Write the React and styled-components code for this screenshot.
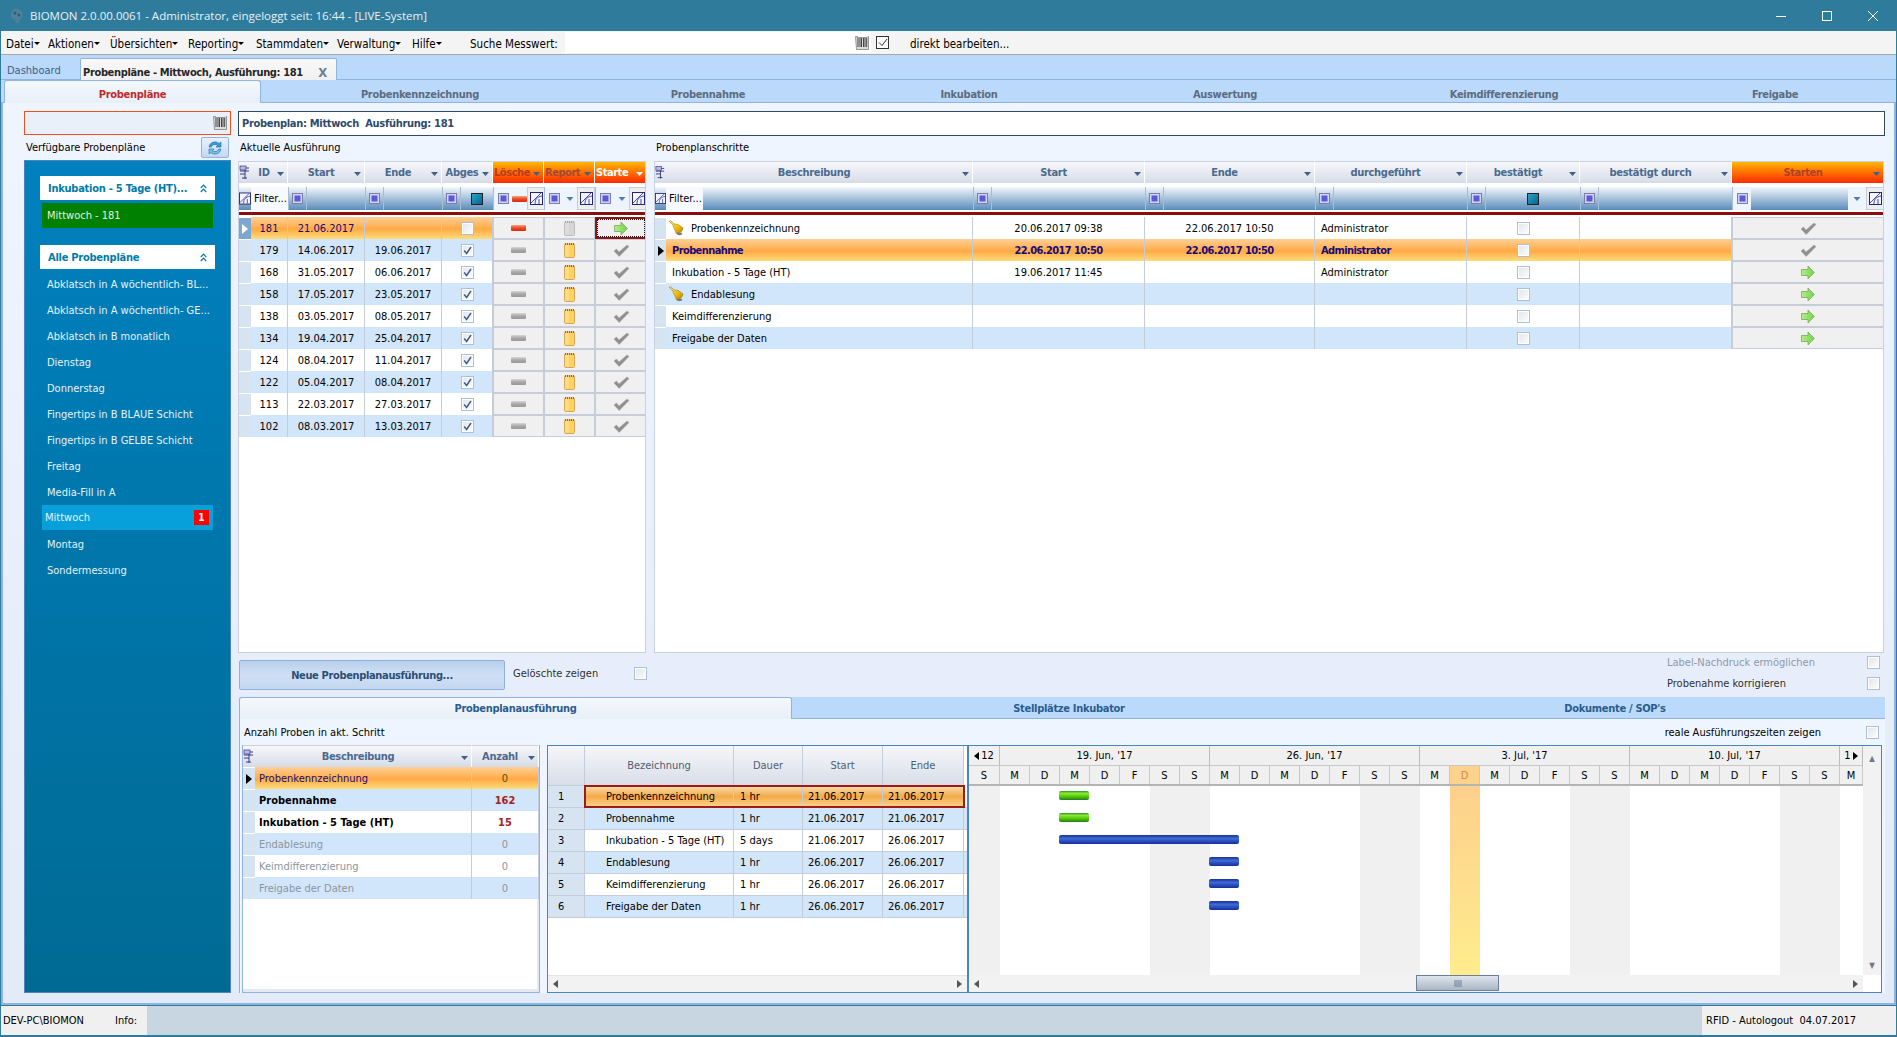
import React from "react";
import styled, { createGlobalStyle, css } from "styled-components";

const GlobalStyle = createGlobalStyle`
  html, body { margin: 0; padding: 0; }
  body {
    width: 1897px;
    height: 1037px;
    overflow: hidden;
    font-family: "DejaVu Sans Condensed", "DejaVu Sans", sans-serif;
    font-stretch: condensed;
    font-size: 11px;
    color: #000;
  }
  * { box-sizing: border-box; }
`;

/* ---------- icons ---------- */
const WinIcon = styled.svg`
  width: 12px;
  height: 12px;
  display: block;
`;

const CaretDown = ({ color = "#3f6288", w = 7 }) => (
  <svg width={w} height="4" viewBox="0 0 7 4" style={{ display: "block", flex: "none" }}>
    <path d="M0 0h7L3.5 4z" fill={color} />
  </svg>
);

const Barcode = ({ size = 16 }) => (
  <svg width={size} height={size} viewBox="0 0 16 16" style={{ display: "block" }}>
    <path d="M1.5 1.5h2l-.4 1H13l1-1h.5V14.5H2.5z" fill="#dcdcdc" stroke="#808080" strokeWidth="0.8" />
    <path d="M4 3v9M6 3v9M7.5 3v9M9.5 3v9M11 3v9M12.7 3v9" stroke="#444" strokeWidth="1" />
  </svg>
);

const RefreshIcon = () => (
  <svg width="18" height="18" viewBox="0 0 18 18">
    <path d="M3 8a6 6 0 0 1 10-3.6L15 3v5h-5l1.6-1.6A4 4 0 0 0 5.2 8z" fill="#3f9bd8" stroke="#1d6cab" strokeWidth=".6" />
    <path d="M15 10a6 6 0 0 1-10 3.6L3 15v-5h5l-1.6 1.6A4 4 0 0 0 12.8 10z" fill="#7bbdea" stroke="#1d6cab" strokeWidth=".6" />
  </svg>
);

const DoubleUp = () => (
  <svg width="7" height="9" viewBox="0 0 7 9" style={{ display: "block" }}>
    <path d="M.8 4 3.5 1.2 6.2 4M.8 8 3.5 5.2 6.2 8" stroke="#007ba7" strokeWidth="1.2" fill="none" />
  </svg>
);

const ColumnChooser = () => (
  <svg width="12" height="16" viewBox="0 0 12 16" style={{ display: "block" }}>
    <path d="M1 3h9M1 6h9M1 9h5M6 1v13M3 13h5" stroke="#3a3a80" strokeWidth="1" fill="none" />
    <rect x="1" y="1" width="6" height="4" fill="#b8b8ea" stroke="#3a3a80" strokeWidth=".7" />
  </svg>
);

const FilterEdit = () => (
  <svg width="13" height="13" viewBox="0 0 13 13" style={{ display: "block" }}>
    <rect x=".5" y=".5" width="12" height="12" fill="#f4f6fc" stroke="#26266e" />
    <path d="M1 11 11 1M5 12c0-5 2-7 7-8M9 12V7" stroke="#4545c5" strokeWidth="1" fill="none" />
  </svg>
);

const OpSquare = () => (
  <svg width="11" height="11" viewBox="0 0 11 11" style={{ display: "block" }}>
    <rect x=".5" y=".5" width="10" height="10" fill="#d0d4f2" stroke="#7a7ea8" />
    <rect x="2.5" y="2.5" width="6" height="6" fill="#5a5ad6" />
  </svg>
);

const TealSquare = () => (
  <svg width="12" height="12" viewBox="0 0 12 12" style={{ display: "block" }}>
    <defs>
      <linearGradient id="tealGrad" x1="0" y1="0" x2="1" y2="1">
        <stop offset="0" stopColor="#29a7c9" />
        <stop offset="1" stopColor="#0b5e8f" />
      </linearGradient>
    </defs>
    <rect x=".5" y=".5" width="11" height="11" fill="url(#tealGrad)" stroke="#222" />
  </svg>
);

const MinusBar = ({ red }) => (
  <svg width="15" height="6" viewBox="0 0 15 6" style={{ display: "block" }}>
    <defs>
      <linearGradient id="minusRed" x1="0" y1="0" x2="0" y2="1">
        <stop offset="0" stopColor="#f7a08a" />
        <stop offset=".5" stopColor="#ec4a20" />
        <stop offset="1" stopColor="#d42c10" />
      </linearGradient>
      <linearGradient id="minusGrey" x1="0" y1="0" x2="0" y2="1">
        <stop offset="0" stopColor="#d8d8d8" />
        <stop offset=".5" stopColor="#a8a8a8" />
        <stop offset="1" stopColor="#999" />
      </linearGradient>
    </defs>
    <rect width="15" height="6" rx="1" fill={red ? "url(#minusRed)" : "url(#minusGrey)"} />
  </svg>
);

const Notepad = ({ off }) => (
  <svg width="11" height="16" viewBox="0 0 11 16" style={{ display: "block" }}>
    <rect x=".5" y="2" width="10" height="13.5" rx="1" fill={off ? "#d6d6d6" : "#ffd15e"} stroke={off ? "#bdbdbd" : "#d9a55a"} />
    <rect x="1" y="2.5" width="4" height="12" fill={off ? "#dcdcdc" : "#ffdd80"} />
    <path d="M1.5 1v2M3.5 1v2M5.5 1v2M7.5 1v2M9.5 1v2" stroke={off ? "#aaa" : "#8a6a3a"} strokeWidth="1" />
  </svg>
);

const CheckMark = () => (
  <svg width="17" height="13" viewBox="0 0 17 13" style={{ display: "block" }}>
    <path d="M1 7l2.5-2 2.5 3L14 1l2 1.5L6.2 12.5z" fill="#8f8f8f" stroke="#a8a8a8" strokeWidth=".6" />
  </svg>
);

const GreenArrow = () => (
  <svg width="14" height="15" viewBox="0 0 14 15" style={{ display: "block" }}>
    <defs>
      <linearGradient id="arrowGreen" x1="0" y1="0" x2="1" y2="0">
        <stop offset="0" stopColor="#b4ef86" />
        <stop offset="1" stopColor="#6fd44a" />
      </linearGradient>
    </defs>
    <path d="M.5 4.5h6.5V1l6.3 6.5L7 14v-3.5H.5z" fill="url(#arrowGreen)" stroke="#7da565" strokeWidth=".8" />
  </svg>
);

const Bell = () => (
  <svg width="17" height="16" viewBox="0 0 17 16" style={{ display: "block" }}>
    <defs>
      <linearGradient id="bellGold" x1="0" y1="0" x2="1" y2="1">
        <stop offset="0" stopColor="#fff27a" />
        <stop offset=".6" stopColor="#ebb800" />
        <stop offset="1" stopColor="#a87c00" />
      </linearGradient>
    </defs>
    <path d="M1.2 1.2 3 .8l3 3.2 4 .4 5 3.6c-.4 3-3 5.5-6.6 5.8C7.6 10 5 7 5 5.2z" fill="url(#bellGold)" stroke="#9a7a10" strokeWidth=".6" />
    <ellipse cx="11.5" cy="13.8" rx="2.8" ry="1.4" fill="#7d7d7d" />
  </svg>
);

const TriRight = ({ color = "#000" }) => (
  <svg width="6" height="10" viewBox="0 0 6 10" style={{ display: "block" }}>
    <path d="M0 0l6 5-6 5z" fill={color} />
  </svg>
);

/* ---------- window chrome ---------- */
const Window = styled.div`
  width: 1897px;
  height: 1037px;
  display: flex;
  flex-direction: column;
  background: #2e7b9c;
  padding: 0 1px 2px 1px;
`;

const TitleBar = styled.div`
  height: 31px;
  flex: none;
  display: flex;
  align-items: center;
  padding: 0 0 0 9px;
  color: #e8f2f6;
  font-family: "Open Sans", sans-serif;
  font-stretch: normal;
  font-size: 11.5px;
`;

const AppLogo = styled.div`
  width: 14px;
  height: 16px;
  margin-right: 6px;
`;

const TitleText = styled.div`
  flex: 1;
`;

const WinButton = styled.div`
  width: 46px;
  height: 31px;
  display: flex;
  align-items: center;
  justify-content: center;
`;

const MenuBar = styled.div`
  height: 24px;
  flex: none;
  background: #f4f4f4;
  display: flex;
  align-items: center;
  padding: 3px 0 0 5px;
  border-bottom: 1px solid #a9a9a9;
  font-size: 11.5px;
`;

const MenuItem = styled.div`
  display: flex;
  align-items: flex-start;
  width: ${(p) => p.$w}px;
  flex: none;
`;

const MiniCaret = styled.span`
  width: 0;
  height: 0;
  margin-top: 5px;
  border-left: 3px solid transparent;
  border-right: 3px solid transparent;
  border-top: 3px solid #000;
`;

const SearchLabel = styled.div`
  margin-left: 26px;
  width: 95px;
  flex: none;
`;

const SearchField = styled.div`
  width: 306px;
  height: 21px;
  margin-top: -3px;
  background: #fff;
  flex: none;
  display: flex;
  align-items: center;
  justify-content: flex-end;
  padding-right: 1px;
`;

const EditToggle = styled.div`
  width: 13px;
  height: 13px;
  margin-top: -3px;
  border: 1px solid #333;
  margin-left: 5px;
  background: #fbfbfb;
  display: flex;
  align-items: center;
  justify-content: center;
  flex: none;
`;

const EditLabel = styled.div`
  margin-left: 21px;
`;

const DocTabs = styled.div`
  height: 25px;
  flex: none;
  background: #bbd9fb;
  display: flex;
  align-items: flex-end;
  padding-left: 6px;
  border-bottom: 1px solid #8fb4e3;
`;

const DashTab = styled.div`
  width: 73px;
  height: 22px;
  padding-top: 7px;
  color: #3b5f87;
`;

const ActiveDocTab = styled.div`
  width: 257px;
  height: 22px;
  margin-bottom: -1px;
  background: linear-gradient(#f9f9f9, #f0f0f0);
  border: 1px solid #8fb4e3;
  border-bottom: none;
  border-radius: 2px 2px 0 0;
  display: flex;
  align-items: center;
  justify-content: space-between;
  padding: 5px 9px 0 2px;
  font-weight: bold;
  letter-spacing: -0.35px;
  color: #262626;
`;

const CloseX = styled.span`
  color: #6e7f92;
  font-size: 13px;
  font-weight: bold;
`;

const StepTabs = styled.div`
  height: 23px;
  flex: none;
  display: grid;
  grid-template-columns: 257px 318px 258px 264px 248px 310px 232px;
  background: #bbd9fb;
  padding-left: 3px;
  border-bottom: 1px solid #8fb4e3;
`;

const StepTab = styled.div`
  display: flex;
  align-items: center;
  justify-content: center;
  font-weight: bold;
  letter-spacing: -0.3px;
  color: #5d6c7e;
  padding-top: 5px;
  ${(p) =>
    p.$active &&
    css`
      color: #bd2a2a;
      background: linear-gradient(#f4f8fe, #e8eff8);
      border: 1px solid #8fb4e3;
      border-bottom: none;
      border-radius: 3px 3px 0 0;
      height: 23px;
    `}
`;

/* ---------- main content ---------- */
const Content = styled.div`
  flex: 1;
  min-height: 0;
  display: flex;
  gap: 7px;
  background: linear-gradient(#eef5ff, #e3eaf8);
  border-right: 2px solid #8fb4e3;
  border-left: 2px solid #8fb4e3;
  border-bottom: 2px solid #8fb4e3;
  padding: 8px 9px 10px 21px;
`;

const LeftColumn = styled.div`
  width: 207px;
  flex: none;
  display: flex;
  flex-direction: column;
`;

const BarcodeBox = styled.div`
  height: 24px;
  flex: none;
  border: 1px solid #f0501c;
  background: #e9f0fa;
  display: flex;
  align-items: center;
  justify-content: flex-end;
  padding-right: 2px;
`;

const PlansHead = styled.div`
  height: 25px;
  flex: none;
  display: flex;
  align-items: center;
  justify-content: space-between;
  padding: 0 2px;
`;

const RefreshBtn = styled.div`
  width: 28px;
  height: 21px;
  border: 1px solid #8fb4e3;
  border-radius: 2px;
  background: linear-gradient(#e9f2fc, #c3d9f2);
  display: flex;
  align-items: center;
  justify-content: center;
`;

const Sidebar = styled.div`
  flex: 1;
  border: 1px solid #4a86bd;
  background: linear-gradient(#0081bf, #006a94);
  padding: 15px 15px 0 15px;
  color: #e6f2f8;
`;

const GroupHead = styled.div`
  height: 24px;
  width: 175px;
  background: #fff;
  color: #007ba7;
  font-weight: bold;
  letter-spacing: -0.25px;
  display: flex;
  align-items: center;
  justify-content: space-between;
  padding: 0 8px;
  margin-top: ${(p) => p.$top || 0}px;
`;

const RunningItem = styled.div`
  height: 25px;
  width: 171px;
  margin: 3px 0 0 2px;
  background: #008000;
  color: #e2f2e2;
  display: flex;
  align-items: center;
  padding-left: 5px;
`;

const PlanList = styled.div`
  margin-top: 2px;
`;

const PlanItem = styled.div`
  height: 26px;
  width: 171px;
  margin-left: 2px;
  display: flex;
  align-items: center;
  justify-content: space-between;
  white-space: nowrap;
  padding: 0 4px 0 ${(p) => (p.$active ? 3 : 5)}px;
  ${(p) =>
    p.$active &&
    css`
      background: #07a0db;
      height: 25px;
      margin-bottom: 1px;
    `}
`;

const RedBadge = styled.div`
  width: 15px;
  height: 15px;
  background: #f00;
  color: #fff;
  font-weight: bold;
  font-size: 10px;
  display: flex;
  align-items: center;
  justify-content: center;
`;

const RightColumn = styled.div`
  flex: 1;
  min-width: 0;
  display: flex;
  flex-direction: column;
`;

const PlanBox = styled.div`
  height: 25px;
  flex: none;
  background: #fff;
  border: 1px solid #2f4a62;
  display: flex;
  align-items: center;
  padding-left: 3px;
  font-weight: bold;
  letter-spacing: -0.3px;
  color: #2d4a6b;
`;

const LabelRow = styled.div`
  height: 25px;
  flex: none;
  display: flex;
  align-items: center;
  padding-bottom: 3px;
`;

const SectionLabel = styled.div`
  width: ${(p) => p.$w}px;
  padding-left: 2px;
  flex: none;
`;

const GridsRow = styled.div`
  height: 492px;
  flex: none;
  display: flex;
  gap: 8px;
`;

const GridBox = styled.div`
  width: ${(p) => p.$w}px;
  flex: none;
  background: #fff;
  border-left: 1px solid #c9d0de;
  border-right: 1px solid #c9d0de;
  border-bottom: 1px solid #c9d0de;
  overflow: hidden;
`;

const HeadRow = styled.div`
  display: grid;
  grid-template-columns: ${(p) => p.$cols};
  height: 22px;
  background: #e4e8ef;
`;

const HeadCell = styled.div`
  position: relative;
  display: flex;
  align-items: center;
  justify-content: center;
  font-weight: bold;
  letter-spacing: -0.3px;
  color: #4a6a8f;
  padding-right: 10px;
  border-right: 1px solid #fff;
  border-top: 1px solid #c9d0de;
  background: linear-gradient(#f6f7fa, #d6dce7);
  white-space: nowrap;
  overflow: hidden;
  ${(p) =>
    p.$hot &&
    css`
      background: linear-gradient(#ffb800, #ff7500 45%, #ff2a00);
      color: ${p.$hot};
      justify-content: flex-start;
      padding-left: 1px;
      letter-spacing: -0.45px;
    `}
  ${(p) =>
    p.$wide &&
    css`
      justify-content: center;
    `}
`;

const Corner = styled.div`
  background: linear-gradient(#f6f7fa, #d6dce7);
  border-top: 1px solid #c9d0de;
  display: flex;
  align-items: center;
  justify-content: center;
`;

const HeadCaret = styled.div`
  position: absolute;
  right: 3px;
  top: 10px;
`;

const FilterRow = styled.div`
  display: grid;
  grid-template-columns: ${(p) => p.$cols};
  height: 23px;
  margin-top: 4px;
  background: linear-gradient(#f2f7fc, #5a8cba);
`;

const FilterCell = styled.div`
  display: flex;
  align-items: center;
  justify-content: ${(p) => p.$justify || "flex-start"};
  border-left: ${(p) => (p.$noLine ? "none" : "1px solid #a9bdd3")};
  overflow: hidden;
  white-space: nowrap;
`;

const OpBtn = styled.div`
  width: 18px;
  height: 23px;
  flex: none;
  display: flex;
  align-items: center;
  justify-content: center;
  border-right: 1px solid #a9bdd3;
  background: ${(p) => (p.$light ? "#eef4fb" : "transparent")};
  ${(p) => p.$light && "border-right: none;"}
`;

const FilterText = styled.div`
  background: #f6f9fd;
  height: 23px;
  width: ${(p) => p.$w || 37}px;
  display: flex;
  align-items: center;
  padding-left: 3px;
`;

const LightFill = styled.div`
  flex: 1;
  height: 23px;
  background: #eef4fb;
  display: flex;
  align-items: center;
  justify-content: center;
`;

const PlainFill = styled.div`
  flex: 1;
  display: flex;
  justify-content: center;
`;

const RaisedIcon = styled.div`
  width: 18px;
  height: 23px;
  flex: none;
  background: #eeeeee;
  border: 1px solid #c6ccd8;
  display: flex;
  align-items: center;
  justify-content: center;
`;

const RedLine = styled.div`
  height: 3px;
  margin-top: 2px;
  background: #8b0d0d;
`;

const DataRows = styled.div`
  margin-top: 2px;
`;

const DataRow = styled.div`
  display: grid;
  grid-template-columns: ${(p) => p.$cols};
  height: 22px;
  background: ${(p) => (p.$sel ? "linear-gradient(#ffcf96, #ffaa45 55%, #ffdc7a)" : p.$alt ? "#d2e6fb" : "#fff")};
  font-weight: ${(p) => (p.$bold ? "bold" : "normal")};
  letter-spacing: ${(p) => (p.$bold ? "-0.6px" : "normal")};
  color: ${(p) => (p.$bold ? "#1a0a78" : "#000")};
`;

const Indicator = styled.div`
  background: ${(p) => (p.$on ? "#7da6d0" : "#d6e3f1")};
  border-top: 1px solid #fff;
  display: flex;
  align-items: center;
  justify-content: center;
`;

const Cell = styled.div`
  display: flex;
  align-items: center;
  justify-content: ${(p) => p.$align || "center"};
  padding-left: ${(p) => p.$pad || 0}px;
  border-right: 1px solid #c4cbdb;
  color: ${(p) => p.$color || "inherit"};
  font-weight: ${(p) => p.$weight || "inherit"};
  white-space: nowrap;
  gap: 6px;
  overflow: hidden;
`;

const ActionCell = styled.div`
  display: flex;
  align-items: center;
  justify-content: center;
  background: #f0f0f0;
  border: 1px solid #c6ccd8;
  ${(p) =>
    p.$focus &&
    css`
      border: 2px solid #8f1414;
      outline: 1px dotted #111;
      outline-offset: -3px;
    `}
`;

const CheckBox = styled.div`
  width: 13px;
  height: 13px;
  flex: none;
  border: 1px solid #a9c0d8;
  background: linear-gradient(135deg, #e2e4e8, #fdfdfd);
  box-shadow: inset 0 0 0 1px #fff;
  display: flex;
  align-items: center;
  justify-content: center;
`;

const Tick = () => (
  <svg width="9" height="9" viewBox="0 0 9 9">
    <path d="M1.2 4.5 3.6 7.4 8 1" stroke="#3f6088" strokeWidth="1.5" fill="none" />
  </svg>
);

/* ---------- middle action row ---------- */
const ActionRow = styled.div`
  height: 44px;
  flex: none;
  display: flex;
  align-items: flex-start;
`;

const NewRunButton = styled.div`
  width: 266px;
  height: 30px;
  margin: 7px 0 0 1px;
  border: 1px solid #8fb0dc;
  border-radius: 2px;
  background: linear-gradient(#b7cfed, #cfe0f5 50%, #c3d7f0);
  display: flex;
  align-items: center;
  justify-content: center;
  font-weight: bold;
  letter-spacing: -0.35px;
  color: #2b4e75;
`;

const DeletedLabel = styled.div`
  margin: 14px 0 0 8px;
  width: 121px;
  color: #303030;
`;

const SmallCheck = styled(CheckBox)`
  margin-top: ${(p) => p.$top}px;
`;

const OptionStack = styled.div`
  margin-left: auto;
  margin-top: 3px;
  margin-right: 5px;
  display: flex;
  flex-direction: column;
  gap: 8px;
`;

const OptionRow = styled.div`
  height: 13px;
  display: grid;
  grid-template-columns: 200px 13px;
  align-items: center;
  color: ${(p) => (p.$dim ? "#8d99a8" : "#303030")};
`;

/* ---------- bottom tabbed panel ---------- */
const BottomTabs = styled.div`
  height: 22px;
  flex: none;
  margin-left: 1px;
  display: grid;
  grid-template-columns: 553px 554px 538px;
  background: #bbd9fb;
  border-bottom: 1px solid #8fb4e3;
`;

const BottomTab = styled.div`
  display: flex;
  align-items: center;
  justify-content: center;
  font-weight: bold;
  letter-spacing: -0.3px;
  color: #2a5d8f;
  ${(p) =>
    p.$active &&
    css`
      height: 22px;
      background: linear-gradient(#f4f8fe, #e8eff8);
      border: 1px solid #8fb4e3;
      border-bottom: none;
      border-radius: 3px 3px 0 0;
    `}
`;

const BottomPanel = styled.div`
  flex: 1;
  min-height: 0;
  margin-left: 1px;
  background: #eef5ff;
  border-left: 1px solid #8fb4e3;
  padding: 0 3px 0 2px;
  display: flex;
  flex-direction: column;
`;

const PanelHead = styled.div`
  height: 26px;
  flex: none;
  display: flex;
  align-items: center;
  justify-content: space-between;
  padding: 0 2px;
`;

const RealTimes = styled.div`
  display: flex;
  align-items: center;
  gap: 45px;
  margin-right: 1px;
`;

const PanelBody = styled.div`
  flex: 1;
  min-height: 0;
  display: flex;
  gap: 7px;
`;

const CountGrid = styled.div`
  width: 298px;
  flex: none;
  background: #fff;
  border: 1px solid #8fb4e3;
  border-top: none;
  box-shadow: inset -2px -3px 0 #e4e8f0;
`;

const GanttWrap = styled.div`
  flex: 1;
  min-width: 0;
  display: flex;
  border: 1px solid #4a86bd;
  background: #fff;
`;

const TaskTable = styled.div`
  width: 421px;
  flex: none;
  display: flex;
  flex-direction: column;
  border-right: 2px solid #4a86bd;
`;

const TaskHead = styled.div`
  display: grid;
  grid-template-columns: 37px 149px 69px 80px 81px;
  height: 40px;
  flex: none;
`;

const TaskHeadCell = styled.div`
  background: linear-gradient(#f6f7fa, #d8dde8);
  border-right: 1px solid #c4cbdb;
  border-bottom: 1px solid #c4cbdb;
  display: flex;
  align-items: center;
  justify-content: center;
  color: #4f6074;
`;

const TaskRow = styled.div`
  display: grid;
  grid-template-columns: 37px 149px 69px 80px 81px;
  height: 22px;
  background: ${(p) => (p.$alt ? "#d2e6fb" : "#fff")};
  border-bottom: 1px solid #c4cbdb;
  position: relative;
`;

const TaskNo = styled.div`
  background: #d6e3f1;
  border-right: 1px solid #c4cbdb;
  display: flex;
  align-items: center;
  padding-left: 10px;
`;

const TaskCell = styled.div`
  display: flex;
  align-items: center;
  padding-left: ${(p) => p.$pad}px;
  border-right: 1px solid #c4cbdb;
  white-space: nowrap;
  overflow: hidden;
  ${(p) => p.$sel && "background: linear-gradient(#f8dfae, #f5a94a 50%, #f9d68b);"}
`;

const SelFrame = styled.div`
  position: absolute;
  left: 36px;
  width: 381px;
  top: -1px;
  bottom: -1px;
  border: 2px solid #a11a1a;
  pointer-events: none;
`;

const TaskScroll = styled.div`
  margin-top: auto;
  height: 17px;
  display: flex;
  align-items: center;
  justify-content: space-between;
  padding: 0 5px;
  background: #f2f2f2;
  border-top: 1px solid #e4e4e4;
`;

const Timeline = styled.div`
  flex: 1;
  min-width: 0;
  display: flex;
  flex-direction: column;
`;

const TimeTop = styled.div`
  flex: 1;
  min-height: 0;
  display: flex;
`;

const Days = styled.div`
  width: 894px;
  flex: none;
  display: flex;
  flex-direction: column;
`;

const WeekRow = styled.div`
  height: 20px;
  flex: none;
  display: flex;
  background: #f0f0f0;
  border-bottom: 1px solid #c8c8c8;
`;

const WeekCell = styled.div`
  width: ${(p) => p.$w}px;
  flex: none;
  display: flex;
  align-items: center;
  justify-content: center;
  gap: 2px;
  border-right: 1px solid #bcbcbc;
  overflow: hidden;
  white-space: nowrap;
`;

const DayRow = styled.div`
  height: 20px;
  flex: none;
  display: flex;
  background: #f0f0f0;
  border-bottom: 2px solid #b4b4b4;
`;

const DayCell = styled.div`
  width: ${(p) => p.$w}px;
  flex: none;
  display: flex;
  align-items: center;
  justify-content: center;
  border-right: 1px solid #c8c8c8;
  overflow: hidden;
  ${(p) => p.$today && "background: #fdd28d; color: #d08a3a;"}
`;

const Chart = styled.div`
  flex: 1;
  min-height: 0;
  position: relative;
  display: flex;
`;

const DayStripe = styled.div`
  width: ${(p) => p.$w}px;
  flex: none;
  background: ${(p) => (p.$today ? "linear-gradient(#fdd08c, #ffec8e)" : p.$weekend ? "#f0f0f0" : "#fff")};
`;

const Bar = styled.div`
  position: absolute;
  height: 9px;
  border-radius: 2px;
  background: ${(p) =>
    p.$green
      ? "linear-gradient(#2c8f2c, #8fe838 25%, #4fc400 65%, #1f7a2a)"
      : "linear-gradient(#16349a, #3f6bd6 40%, #2c50c0 65%, #12309a)"};
`;

const VScroll = styled.div`
  flex: 1;
  background: #f2f2f2;
  display: flex;
  flex-direction: column;
  justify-content: space-between;
  align-items: center;
  padding: 8px 0 5px;
  color: #777;
  font-size: 8px;
`;

const HScroll = styled.div`
  height: 17px;
  flex: none;
  display: flex;
  align-items: center;
  width: 894px;
  background: #f2f2f2;
  padding: 0 5px;
  position: relative;
  justify-content: space-between;
`;

const Thumb = styled.div`
  position: absolute;
  left: 447px;
  top: 0;
  width: 83px;
  height: 16px;
  border: 1px solid #6d7f96;
  background: linear-gradient(#dfe5ec, #a8b6c5);
  display: flex;
  align-items: center;
  justify-content: center;
`;

/* ---------- status bar ---------- */
const StatusBar = styled.div`
  height: 29px;
  flex: none;
  display: grid;
  grid-template-columns: 146px 1fr 194px;
  background: #c8d6e2;
  margin-top: 1px;
`;

const StatusLeft = styled.div`
  background: #f0f0f0;
  display: flex;
  align-items: center;
  padding-left: 2px;
  gap: 31px;
  white-space: nowrap;
`;

const StatusRight = styled.div`
  background: #f0f0f0;
  display: flex;
  align-items: center;
  padding-left: 4px;
  grid-column: 3;
`;

/* ---------- data ---------- */
const MENU = [
  ["Datei", 42],
  ["Aktionen", 62],
  ["Übersichten", 78],
  ["Reporting", 68],
  ["Stammdaten", 81],
  ["Verwaltung", 75],
  ["Hilfe", 32],
];

const PLANS = [
  "Abklatsch in A wöchentlich- BL...",
  "Abklatsch in A wöchentlich- GE...",
  "Abklatsch in B monatlich",
  "Dienstag",
  "Donnerstag",
  "Fingertips in B BLAUE Schicht",
  "Fingertips in B GELBE Schicht",
  "Freitag",
  "Media-Fill in A",
  "Mittwoch",
  "Montag",
  "Sondermessung",
];

const RUNS = [
  ["179", "14.06.2017", "19.06.2017"],
  ["168", "31.05.2017", "06.06.2017"],
  ["158", "17.05.2017", "23.05.2017"],
  ["138", "03.05.2017", "08.05.2017"],
  ["134", "19.04.2017", "25.04.2017"],
  ["124", "08.04.2017", "11.04.2017"],
  ["122", "05.04.2017", "08.04.2017"],
  ["113", "22.03.2017", "27.03.2017"],
  ["102", "08.03.2017", "13.03.2017"],
];

const STEPS = [
  { name: "Probenkennzeichnung", bell: true, start: "20.06.2017 09:38", end: "22.06.2017 10:50", by: "Administrator", done: true },
  { name: "Probennahme", sel: true, start: "22.06.2017 10:50", end: "22.06.2017 10:50", by: "Administrator", done: true },
  { name: "Inkubation - 5 Tage (HT)", start: "19.06.2017 11:45", by: "Administrator" },
  { name: "Endablesung", bell: true, alt: true },
  { name: "Keimdifferenzierung" },
  { name: "Freigabe der Daten", alt: true },
];

const COUNTS = [
  ["Probenkennzeichnung", "0"],
  ["Probennahme", "162"],
  ["Inkubation - 5 Tage (HT)", "15"],
  ["Endablesung", "0"],
  ["Keimdifferenzierung", "0"],
  ["Freigabe der Daten", "0"],
];

const TASKS = [
  ["Probenkennzeichnung", "1 hr", "21.06.2017", "21.06.2017"],
  ["Probennahme", "1 hr", "21.06.2017", "21.06.2017"],
  ["Inkubation - 5 Tage (HT)", "5 days", "21.06.2017", "26.06.2017"],
  ["Endablesung", "1 hr", "26.06.2017", "26.06.2017"],
  ["Keimdifferenzierung", "1 hr", "26.06.2017", "26.06.2017"],
  ["Freigabe der Daten", "1 hr", "26.06.2017", "26.06.2017"],
];

const DAY_LETTERS = ["M", "D", "M", "D", "F", "S", "S"];
const DAYS = ["S", ...DAY_LETTERS, ...DAY_LETTERS, ...DAY_LETTERS, ...DAY_LETTERS, "M"];
const TODAY_INDEX = 16;
const dayWidth = (i) => (i === 0 ? 31 : i === DAYS.length - 1 ? 23 : 30);

const BARS = [
  { left: 90, width: 30, top: 5, green: true },
  { left: 90, width: 30, top: 27, green: true },
  { left: 90, width: 180, top: 49 },
  { left: 240, width: 30, top: 71 },
  { left: 240, width: 30, top: 93 },
  { left: 240, width: 30, top: 115 },
];

const RUN_COLS = "12px 37px 77px 77px 51px 51px 51px 52px";
const STEP_COLS = "11px 307px 172px 170px 152px 113px 152px 152px";
const COUNT_COLS = "12px 217px 1fr";

const HeadTitle = ({ children, hot, wide }) => (
  <HeadCell $hot={hot} $wide={wide}>
    {children}
    <HeadCaret>
      <CaretDown color={hot === "#fff" ? "#fff" : "#3f6288"} />
    </HeadCaret>
  </HeadCell>
);

const ActionFilter = ({ minus }) => (
  <FilterCell>
    <OpBtn $light>
      <OpSquare />
    </OpBtn>
    <LightFill>{minus ? <MinusBar red /> : <CaretDown color="#4a7fb5" w={8} />}</LightFill>
    <RaisedIcon>
      <FilterEdit />
    </RaisedIcon>
  </FilterCell>
);

const RunsGrid = () => (
  <GridBox $w={408}>
    <HeadRow $cols={RUN_COLS}>
      <Corner>
        <ColumnChooser />
      </Corner>
      <HeadTitle>ID</HeadTitle>
      <HeadTitle>Start</HeadTitle>
      <HeadTitle>Ende</HeadTitle>
      <HeadTitle>Abges</HeadTitle>
      <HeadTitle hot="#b93c1e">Lösche</HeadTitle>
      <HeadTitle hot="#a5483a">Report</HeadTitle>
      <HeadTitle hot="#fff">Starte</HeadTitle>
    </HeadRow>
    <FilterRow $cols={RUN_COLS}>
      <FilterCell $noLine $justify="center">
        <FilterEdit />
      </FilterCell>
      <FilterCell $noLine>
        <FilterText>Filter...</FilterText>
      </FilterCell>
      <FilterCell>
        <OpBtn>
          <OpSquare />
        </OpBtn>
      </FilterCell>
      <FilterCell>
        <OpBtn>
          <OpSquare />
        </OpBtn>
      </FilterCell>
      <FilterCell>
        <OpBtn>
          <OpSquare />
        </OpBtn>
        <PlainFill>
          <TealSquare />
        </PlainFill>
      </FilterCell>
      <ActionFilter minus />
      <ActionFilter />
      <ActionFilter />
    </FilterRow>
    <RedLine />
    <DataRows>
      <DataRow $cols={RUN_COLS} $sel>
        <Indicator $on>
          <TriRight color="#fff" />
        </Indicator>
        <Cell $color="#1a0a78">181</Cell>
        <Cell $color="#1a0a78">21.06.2017</Cell>
        <Cell />
        <Cell>
          <CheckBox />
        </Cell>
        <ActionCell>
          <MinusBar red />
        </ActionCell>
        <ActionCell>
          <Notepad off />
        </ActionCell>
        <ActionCell $focus>
          <GreenArrow />
        </ActionCell>
      </DataRow>
      {RUNS.map((r, i) => (
        <DataRow key={r[0]} $cols={RUN_COLS} $alt={i % 2 === 0}>
          <Indicator />
          <Cell>{r[0]}</Cell>
          <Cell>{r[1]}</Cell>
          <Cell>{r[2]}</Cell>
          <Cell>
            <CheckBox>
              <Tick />
            </CheckBox>
          </Cell>
          <ActionCell>
            <MinusBar />
          </ActionCell>
          <ActionCell>
            <Notepad />
          </ActionCell>
          <ActionCell>
            <CheckMark />
          </ActionCell>
        </DataRow>
      ))}
    </DataRows>
  </GridBox>
);

const StepsGrid = () => (
  <GridBox $w={1230}>
    <HeadRow $cols={STEP_COLS}>
      <Corner>
        <ColumnChooser />
      </Corner>
      <HeadTitle>Beschreibung</HeadTitle>
      <HeadTitle>Start</HeadTitle>
      <HeadTitle>Ende</HeadTitle>
      <HeadTitle>durchgeführt</HeadTitle>
      <HeadTitle>bestätigt</HeadTitle>
      <HeadTitle>bestätigt durch</HeadTitle>
      <HeadTitle hot="#b0402a" wide>
        Starten
      </HeadTitle>
    </HeadRow>
    <FilterRow $cols={STEP_COLS}>
      <FilterCell $noLine $justify="center">
        <FilterEdit />
      </FilterCell>
      <FilterCell $noLine>
        <FilterText $w={37}>Filter...</FilterText>
      </FilterCell>
      {[0, 1, 2].map((k) => (
        <FilterCell key={k}>
          <OpBtn>
            <OpSquare />
          </OpBtn>
        </FilterCell>
      ))}
      <FilterCell>
        <OpBtn>
          <OpSquare />
        </OpBtn>
        <PlainFill>
          <TealSquare />
        </PlainFill>
      </FilterCell>
      <FilterCell>
        <OpBtn>
          <OpSquare />
        </OpBtn>
      </FilterCell>
      <FilterCell>
        <OpBtn $light>
          <OpSquare />
        </OpBtn>
        <PlainFill />
        <OpBtn $light>
          <CaretDown color="#4a7fb5" w={8} />
        </OpBtn>
        <RaisedIcon>
          <FilterEdit />
        </RaisedIcon>
      </FilterCell>
    </FilterRow>
    <RedLine />
    <DataRows>
      {STEPS.map((s) => (
        <DataRow key={s.name} $cols={STEP_COLS} $sel={s.sel} $alt={s.alt} $bold={s.sel}>
          <Indicator>{s.sel && <TriRight />}</Indicator>
          <Cell $align="flex-start" $pad={s.bell ? 2 : 6}>
            {s.bell && <Bell />}
            {s.name}
          </Cell>
          <Cell>{s.start}</Cell>
          <Cell>{s.end}</Cell>
          <Cell $align="flex-start" $pad={6}>
            {s.by}
          </Cell>
          <Cell>
            <CheckBox />
          </Cell>
          <Cell />
          <ActionCell>{s.done ? <CheckMark /> : <GreenArrow />}</ActionCell>
        </DataRow>
      ))}
    </DataRows>
  </GridBox>
);

const CountsGrid = () => (
  <CountGrid>
    <HeadRow $cols={COUNT_COLS}>
      <Corner>
        <ColumnChooser />
      </Corner>
      <HeadTitle>Beschreibung</HeadTitle>
      <HeadTitle>Anzahl</HeadTitle>
    </HeadRow>
    {COUNTS.map((c, i) => {
      const sel = i === 0;
      const hot = c[1] !== "0";
      return (
        <DataRow key={c[0]} $cols={COUNT_COLS} $sel={sel} $alt={i % 2 === 1}>
          <Indicator>{sel && <TriRight />}</Indicator>
          <Cell
            $align="flex-start"
            $pad={4}
            $weight={hot ? "bold" : "normal"}
            $color={sel ? "#1a0a78" : hot ? "#000" : "#8d959e"}
          >
            {c[0]}
          </Cell>
          <Cell $weight={hot ? "bold" : "normal"} $color={hot ? "#a52222" : sel ? "#5a4a10" : "#8d959e"}>
            {c[1]}
          </Cell>
        </DataRow>
      );
    })}
  </CountGrid>
);

const TasksTable = () => (
  <TaskTable>
    <TaskHead>
      <TaskHeadCell />
      <TaskHeadCell>Bezeichnung</TaskHeadCell>
      <TaskHeadCell>Dauer</TaskHeadCell>
      <TaskHeadCell>Start</TaskHeadCell>
      <TaskHeadCell>Ende</TaskHeadCell>
    </TaskHead>
    {TASKS.map((t, i) => (
      <TaskRow key={t[0]} $alt={i % 2 === 1}>
        <TaskNo>{i + 1}</TaskNo>
        <TaskCell $pad={21} $sel={i === 0}>
          {t[0]}
        </TaskCell>
        <TaskCell $pad={6} $sel={i === 0}>
          {t[1]}
        </TaskCell>
        <TaskCell $pad={5} $sel={i === 0}>
          {t[2]}
        </TaskCell>
        <TaskCell $pad={5} $sel={i === 0}>
          {t[3]}
        </TaskCell>
        {i === 0 && <SelFrame />}
      </TaskRow>
    ))}
    <TaskScroll>
      <svg width="5" height="8" viewBox="0 0 5 8">
        <path d="M5 0v8L0 4z" fill="#555" />
      </svg>
      <svg width="5" height="8" viewBox="0 0 5 8">
        <path d="M0 0v8l5-4z" fill="#555" />
      </svg>
    </TaskScroll>
  </TaskTable>
);

const GanttChart = () => (
  <Timeline>
    <TimeTop>
      <Days>
        <WeekRow>
          <WeekCell $w={31}>
            <svg width="5" height="8" viewBox="0 0 5 8">
              <path d="M5 0v8L0 4z" fill="#000" />
            </svg>
            12
          </WeekCell>
          <WeekCell $w={210}>19. Jun, '17</WeekCell>
          <WeekCell $w={210}>26. Jun, '17</WeekCell>
          <WeekCell $w={210}>3. Jul, '17</WeekCell>
          <WeekCell $w={210}>10. Jul, '17</WeekCell>
          <WeekCell $w={23}>
            1
            <svg width="5" height="8" viewBox="0 0 5 8">
              <path d="M0 0v8l5-4z" fill="#000" />
            </svg>
          </WeekCell>
        </WeekRow>
        <DayRow>
          {DAYS.map((d, i) => (
            <DayCell key={i} $w={dayWidth(i)} $today={i === TODAY_INDEX}>
              {d}
            </DayCell>
          ))}
        </DayRow>
        <Chart>
          {DAYS.map((d, i) => (
            <DayStripe key={i} $w={dayWidth(i)} $weekend={d === "S"} $today={i === TODAY_INDEX} />
          ))}
          {BARS.map((b, i) => (
            <Bar key={i} $green={b.green} style={{ left: b.left, width: b.width, top: b.top }} />
          ))}
        </Chart>
      </Days>
      <VScroll>
        <span>▲</span>
        <span>▼</span>
      </VScroll>
    </TimeTop>
    <HScroll>
      <svg width="5" height="8" viewBox="0 0 5 8">
        <path d="M5 0v8L0 4z" fill="#555" />
      </svg>
      <Thumb>
        <svg width="8" height="7" viewBox="0 0 8 7">
          <path d="M1 0v7M3 0v7M5 0v7M7 0v7" stroke="#6d7f96" />
        </svg>
      </Thumb>
      <svg width="5" height="8" viewBox="0 0 5 8">
        <path d="M0 0v8l5-4z" fill="#555" />
      </svg>
    </HScroll>
  </Timeline>
);

const App = () => (
  <>
    <GlobalStyle />
    <Window>
      <TitleBar>
        <AppLogo>
          <svg width="14" height="16" viewBox="0 0 14 16">
            <path d="M4 1c3-1 7 0 8 3s1 6-2 7l-1 4H6l-1-3c-3-1-5-3-4-6s1-4 3-5z" fill="#4f7f99" />
            <circle cx="5" cy="5" r="1.5" fill="#2a5f78" />
            <circle cx="9" cy="7" r="1.5" fill="#2a5f78" />
          </svg>
        </AppLogo>
        <TitleText>BIOMON 2.0.00.0061 - Administrator, eingeloggt seit: 16:44 - [LIVE-System]</TitleText>
        <WinButton>
          <WinIcon viewBox="0 0 12 12">
            <path d="M1 6.5h10" stroke="#fff" />
          </WinIcon>
        </WinButton>
        <WinButton>
          <WinIcon viewBox="0 0 12 12">
            <rect x="1.5" y="1.5" width="9" height="9" fill="none" stroke="#fff" />
          </WinIcon>
        </WinButton>
        <WinButton>
          <WinIcon viewBox="0 0 12 12">
            <path d="M1 1l10 10M11 1 1 11" stroke="#fff" />
          </WinIcon>
        </WinButton>
      </TitleBar>

      <MenuBar>
        {MENU.map(([label, w]) => (
          <MenuItem key={label} $w={w}>
            {label}
            <MiniCaret />
          </MenuItem>
        ))}
        <SearchLabel>Suche Messwert:</SearchLabel>
        <SearchField>
          <Barcode />
        </SearchField>
        <EditToggle>
          <svg width="10" height="9" viewBox="0 0 10 9">
            <path d="M1 4.5 4 7.5 9 1" stroke="#333" fill="none" />
          </svg>
        </EditToggle>
        <EditLabel>direkt bearbeiten...</EditLabel>
      </MenuBar>

      <DocTabs>
        <DashTab>Dashboard</DashTab>
        <ActiveDocTab>
          Probenpläne - Mittwoch, Ausführung: 181
          <CloseX>X</CloseX>
        </ActiveDocTab>
      </DocTabs>

      <StepTabs>
        <StepTab $active>Probenpläne</StepTab>
        <StepTab>Probenkennzeichnung</StepTab>
        <StepTab>Probennahme</StepTab>
        <StepTab>Inkubation</StepTab>
        <StepTab>Auswertung</StepTab>
        <StepTab>Keimdifferenzierung</StepTab>
        <StepTab>Freigabe</StepTab>
      </StepTabs>

      <Content>
        <LeftColumn>
          <BarcodeBox>
            <Barcode />
          </BarcodeBox>
          <PlansHead>
            Verfügbare Probenpläne
            <RefreshBtn>
              <RefreshIcon />
            </RefreshBtn>
          </PlansHead>
          <Sidebar>
            <GroupHead>
              Inkubation - 5 Tage (HT)...
              <DoubleUp />
            </GroupHead>
            <RunningItem>Mittwoch - 181</RunningItem>
            <GroupHead $top={17}>
              Alle Probenpläne
              <DoubleUp />
            </GroupHead>
            <PlanList>
              {PLANS.map((p) => (
                <PlanItem key={p} $active={p === "Mittwoch"}>
                  {p}
                  {p === "Mittwoch" && <RedBadge>1</RedBadge>}
                </PlanItem>
              ))}
            </PlanList>
          </Sidebar>
        </LeftColumn>

        <RightColumn>
          <PlanBox>Probenplan: Mittwoch&nbsp; Ausführung: 181</PlanBox>
          <LabelRow>
            <SectionLabel $w={416}>Aktuelle Ausführung</SectionLabel>
            <SectionLabel>Probenplanschritte</SectionLabel>
          </LabelRow>
          <GridsRow>
            <RunsGrid />
            <StepsGrid />
          </GridsRow>
          <ActionRow>
            <NewRunButton>Neue Probenplanausführung...</NewRunButton>
            <DeletedLabel>Gelöschte zeigen</DeletedLabel>
            <SmallCheck $top={14} />
            <OptionStack>
              <OptionRow $dim>
                Label-Nachdruck ermöglichen
                <CheckBox />
              </OptionRow>
              <OptionRow>
                Probenahme korrigieren
                <CheckBox />
              </OptionRow>
            </OptionStack>
          </ActionRow>
          <BottomTabs>
            <BottomTab $active>Probenplanausführung</BottomTab>
            <BottomTab>Stellplätze Inkubator</BottomTab>
            <BottomTab>Dokumente / SOP's</BottomTab>
          </BottomTabs>
          <BottomPanel>
            <PanelHead>
              Anzahl Proben in akt. Schritt
              <RealTimes>
                reale Ausführungszeiten zeigen
                <CheckBox />
              </RealTimes>
            </PanelHead>
            <PanelBody>
              <CountsGrid />
              <GanttWrap>
                <TasksTable />
                <GanttChart />
              </GanttWrap>
            </PanelBody>
          </BottomPanel>
        </RightColumn>
      </Content>

      <StatusBar>
        <StatusLeft>
          DEV-PC\BIOMON
          <span>Info:</span>
        </StatusLeft>
        <StatusRight>RFID - Autologout&nbsp; 04.07.2017</StatusRight>
      </StatusBar>
    </Window>
  </>
);

export default App;
